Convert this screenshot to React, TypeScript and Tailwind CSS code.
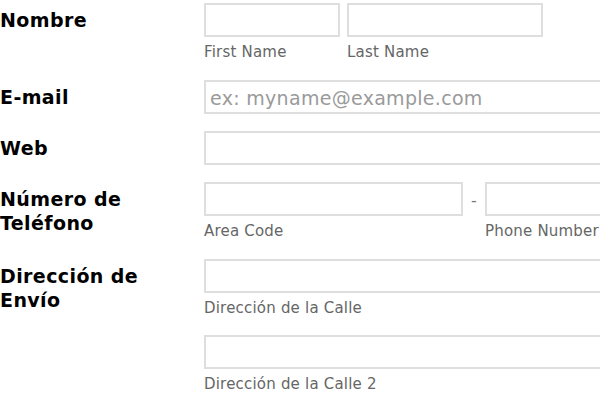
import React from "react";

function Box({ className = "", placeholder = "" }: { className?: string; placeholder?: string }) {
  return (
    <div
      className={`h-[34px] border-2 border-[#dedede] bg-white flex items-center pl-[4px] pt-[3px] text-[19px] tracking-[0.3px] text-[#9a9a9a] whitespace-nowrap overflow-hidden ${className}`}
    >
      {placeholder}
    </div>
  );
}

function Sub({ children }: { children: React.ReactNode }) {
  return (
    <div className="h-[26px] leading-[31px] text-[15px] tracking-[0.2px] text-[#666] whitespace-nowrap">
      {children}
    </div>
  );
}

function Label({ children }: { children: React.ReactNode }) {
  return (
    <div className="w-[204px] shrink-0 pt-[5px] text-[19px] leading-[24px] font-bold tracking-[0.4px] text-black">
      {children}
    </div>
  );
}

export default function App() {
  return (
    <div className="w-[600px] h-[400px] overflow-hidden bg-white pt-[3px] font-['DejaVu_Sans',sans-serif]">
      <div className="flex mb-[17px]">
        <Label>Nombre</Label>
        <div className="flex gap-[7px]">
          <div className="w-[136px]">
            <Box />
            <Sub>First Name</Sub>
          </div>
          <div className="w-[196px]">
            <Box />
            <Sub>Last Name</Sub>
          </div>
        </div>
      </div>

      <div className="flex mb-[17px]">
        <Label>E-mail</Label>
        <div className="w-[420px] shrink-0">
          <Box placeholder="ex: myname@example.com" />
        </div>
      </div>

      <div className="flex mb-[17px]">
        <Label>Web</Label>
        <div className="w-[420px] shrink-0">
          <Box />
        </div>
      </div>

      <div className="flex mb-[17px]">
        <Label>
          Número de
          <br />
          Teléfono
        </Label>
        <div className="flex shrink-0">
          <div className="w-[259px]">
            <Box />
            <Sub>Area Code</Sub>
          </div>
          <div className="w-[22px] h-[34px] leading-[38px] text-center text-[16px] text-[#777]">-</div>
          <div className="w-[200px]">
            <Box />
            <Sub>Phone Number</Sub>
          </div>
        </div>
      </div>

      <div className="flex">
        <Label>
          Dirección de
          <br />
          Envío
        </Label>
        <div className="w-[420px] shrink-0">
          <Box />
          <Sub>Dirección de la Calle</Sub>
          <div className="h-[16px]" />
          <Box />
          <Sub>Dirección de la Calle 2</Sub>
        </div>
      </div>
    </div>
  );
}
